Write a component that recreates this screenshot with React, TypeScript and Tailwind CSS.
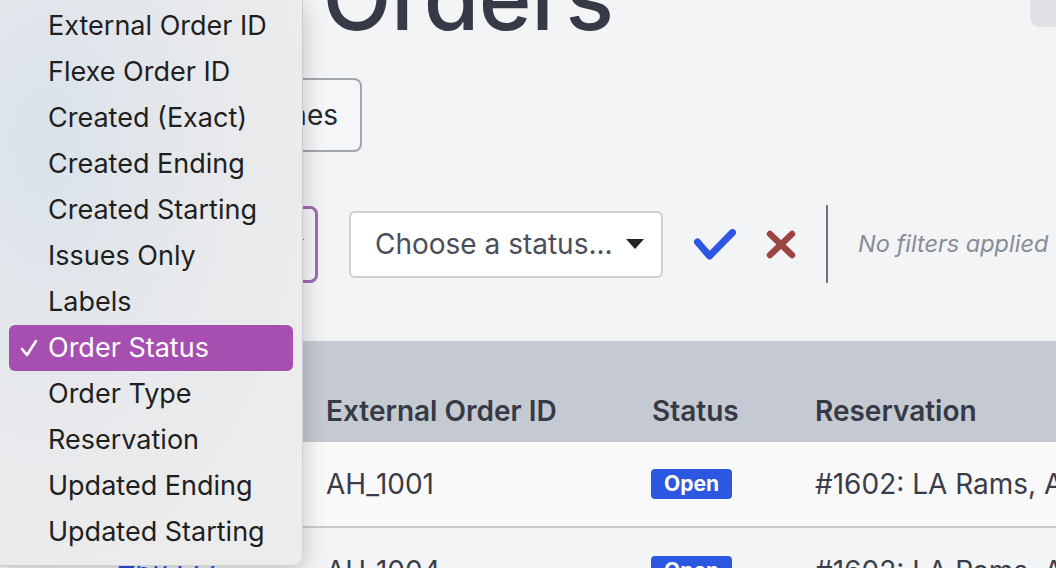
import React from 'react';

const menuItems = [
    'External Order ID',
    'Flexe Order ID',
    'Created (Exact)',
    'Created Ending',
    'Created Starting',
    'Issues Only',
    'Labels',
    'Order Status',
    'Order Type',
    'Reservation',
    'Updated Ending',
    'Updated Starting',
];

const rows = [
    { id: '#58771', externalId: 'AH_1001', status: 'Open', reservation: '#1602: LA Rams, AT&T Stadium' },
    { id: '#58777', externalId: 'AH_1004', status: 'Open', reservation: '#1602: LA Rams, AT&T Stadium' },
];

const Caret = () => (
    <svg width="18" height="10" viewBox="0 0 18 10" className="shrink-0">
        <polygon points="0,0 18,0 9,10" fill="#222327" />
    </svg>
);

const FilterMenu = () => (
    <div className="absolute left-0 top-0 w-[303px] h-[566px] rounded-br-[10px] border-r border-b border-black/10 bg-[radial-gradient(ellipse_at_15%_25%,#dae2ea_0%,#e7e9ec_45%,#ececec_80%)] shadow-[0_6px_24px_rgba(0,0,0,0.22)] pt-[3px] font-['Inter',sans-serif]">
        {menuItems.map((label) => {
            const active = label === 'Order Status';
            return (
                <div
                    key={label}
                    className={
                        active
                            ? 'relative mx-[9px] h-[46px] rounded-[6px] bg-[#a64fb0] pl-[39px] flex items-center text-[27px] text-white whitespace-nowrap'
                            : 'relative mx-[9px] h-[46px] pl-[39px] flex items-center text-[27px] text-[#1f1f1f] whitespace-nowrap'
                    }
                >
                    {active && (
                        <svg width="18" height="18" viewBox="0 0 18 18" className="absolute left-[11px]">
                            <polyline points="2,10 7,16 16,2" fill="none" stroke="white" strokeWidth="2.6" strokeLinecap="round" strokeLinejoin="round" />
                        </svg>
                    )}
                    {label}
                </div>
            );
        })}
    </div>
);

export default function App() {
    return (
        <div className="relative w-[1056px] h-[568px] overflow-hidden bg-[#f3f4f6] font-['Inter',sans-serif] text-[#363946]">
            <div className="flex flex-col">
                {/* Title row */}
                <div className="flex items-start">
                    <h1 className="-mt-[47px] ml-[-50px] text-[90px] leading-[90px] font-medium tracking-[-0.5px] whitespace-nowrap">
                        Inbound Orders
                    </h1>
                    <div className="ml-auto w-[26px] h-[27px] shrink-0 rounded-bl-[10px] bg-[#e1e2e6]" />
                </div>

                {/* Toolbar */}
                <div className="mt-[35px] flex">
                    <button className="ml-[142px] w-[220px] h-[74px] rounded-lg border-2 border-[#a2a6ae] bg-[#f5f6f8] flex items-center justify-end pr-[22px] text-[28px] text-[#26282f] whitespace-nowrap">
                        Order Lines
                    </button>
                </div>

                {/* Filter row */}
                <div className="mt-[53px] flex items-center">
                    <div className="ml-[58px] w-[260px] h-[77px] rounded-lg border-[3px] border-[#9f6cb0] bg-[#f7f7f9] flex items-center justify-end pr-[11px]">
                        <Caret />
                    </div>
                    <div className="ml-[31px] w-[314px] h-[67px] rounded-md border-2 border-[#cdcfd3] bg-white flex items-center justify-between pl-[24px] pr-[17px]">
                        <span className="text-[28px] text-[#4a4e5a] whitespace-nowrap">Choose a status...</span>
                        <Caret />
                    </div>
                    <svg width="42" height="31" viewBox="0 0 42 31" className="ml-[31px] shrink-0">
                        <polyline points="3.5,13 15.5,27 38.5,3.5" fill="none" stroke="#2d57e2" strokeWidth="7" strokeLinecap="round" strokeLinejoin="round" />
                    </svg>
                    <svg width="30" height="29" viewBox="0 0 30 29" className="ml-[30px] shrink-0">
                        <g stroke="#9d4641" strokeWidth="6.5" strokeLinecap="round">
                            <line x1="4" y1="4" x2="26" y2="25" />
                            <line x1="26" y1="4" x2="4" y2="25" />
                        </g>
                    </svg>
                    <div className="ml-[30px] w-[2px] h-[78px] shrink-0 bg-[#6e7380]" />
                    <span className="ml-[30px] text-[23.5px] italic text-[#878c98] whitespace-nowrap">No filters applied</span>
                </div>

                {/* Orders table */}
                <div className="mt-[58px] w-full overflow-hidden">
                    <div className="grid grid-cols-[326px_326px_163px_1fr] h-[101px] items-end bg-[#c5c9d1] pb-[10px] text-[28px] font-semibold text-[#363946]">
                        <span className="pl-[117px]">ID</span>
                        <span className="whitespace-nowrap">External Order ID</span>
                        <span>Status</span>
                        <span className="whitespace-nowrap">Reservation</span>
                    </div>
                    {rows.map((row, i) => (
                        <div
                            key={row.externalId}
                            className={
                                i === 0
                                    ? 'grid grid-cols-[326px_326px_163px_1fr] h-[86px] items-center border-b-2 border-[#c8cbd0] bg-[#f9f9fa] text-[28px] text-[#3a3d49]'
                                    : 'grid grid-cols-[326px_326px_163px_1fr] h-[86px] items-center bg-[#f3f4f6] text-[28px] text-[#3a3d49]'
                            }
                        >
                            <span className="pl-[117px] text-[#2a4fd6] underline">{row.id}</span>
                            <span>{row.externalId}</span>
                            <span className="flex">
                                <span className="-ml-[1px] inline-flex h-[30px] w-[81px] items-center justify-center rounded-[4px] bg-[#2b57e1] text-[21px] font-bold text-white">
                                    {row.status}
                                </span>
                            </span>
                            <span className="whitespace-nowrap overflow-hidden">{row.reservation}</span>
                        </div>
                    ))}
                </div>
            </div>

            <FilterMenu />
        </div>
    );
}
